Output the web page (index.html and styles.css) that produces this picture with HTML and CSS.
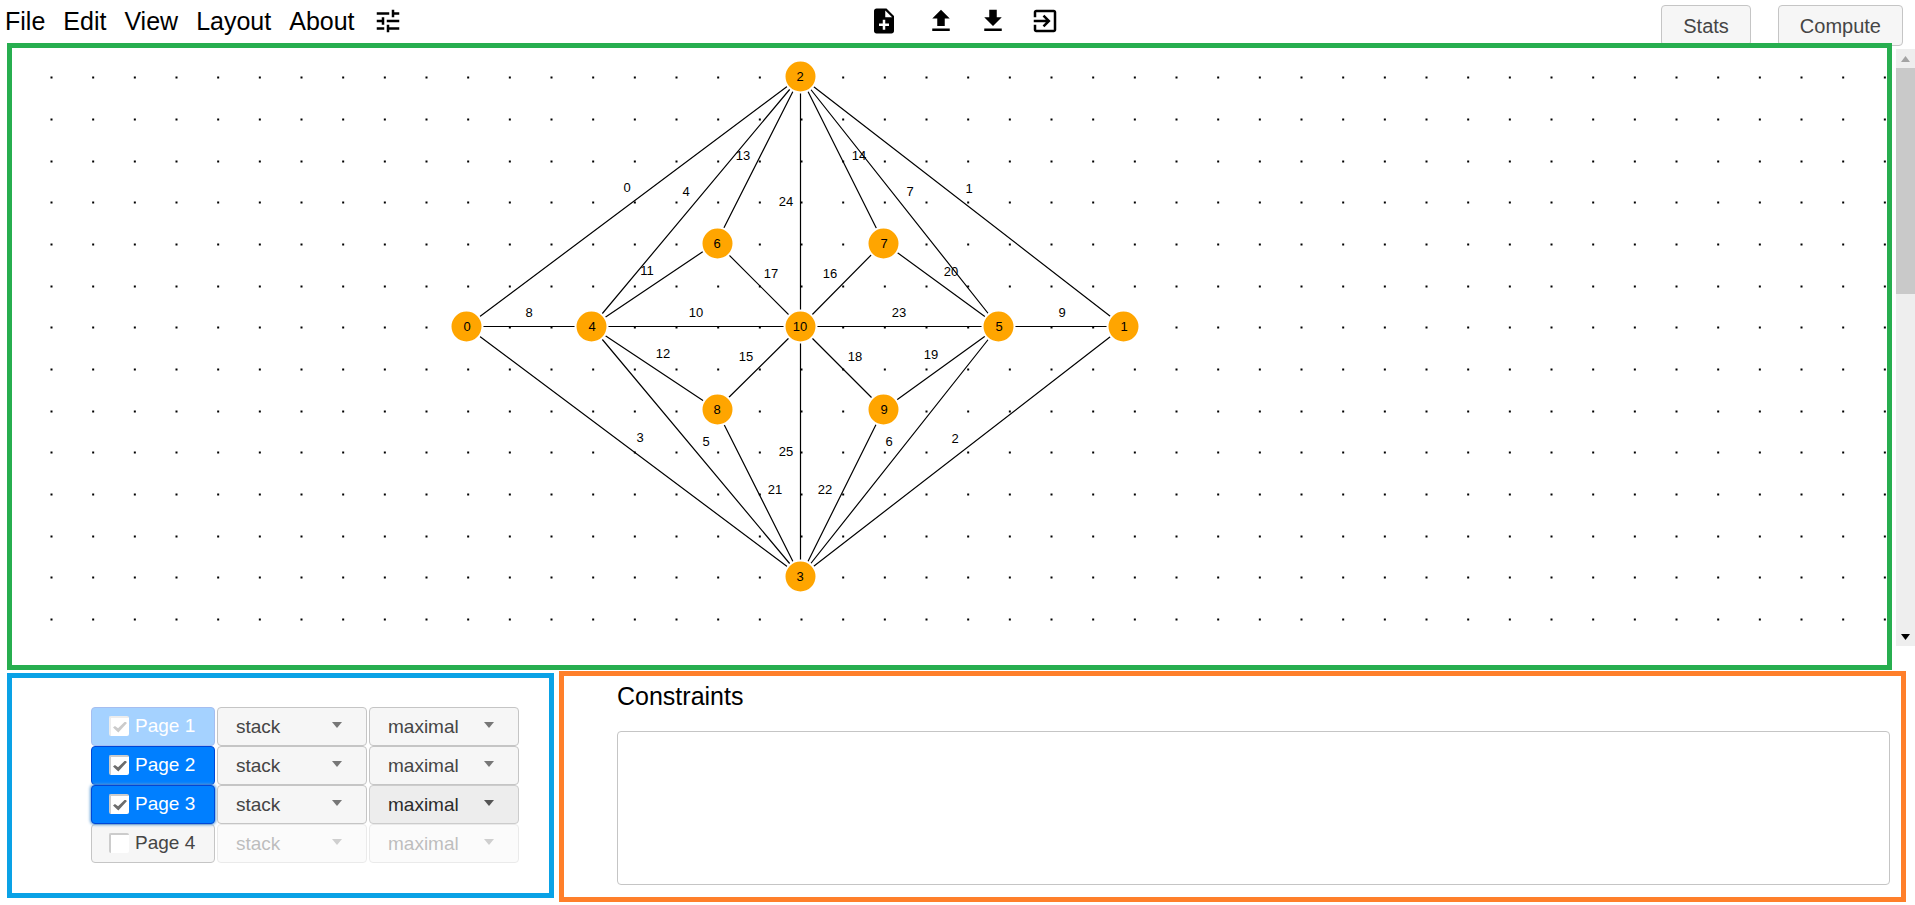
FILE: index.html
```html
<!DOCTYPE html>
<html lang="en">
<head>
<meta charset="utf-8">
<title>Graph layout editor</title>
<link rel="stylesheet" href="styles.css">
</head>
<body>
<header class="topbar">
  <nav class="menu">
    <a href="#file">File</a>
    <a href="#edit">Edit</a>
    <a href="#view">View</a>
    <a href="#layout">Layout</a>
    <a href="#about">About</a>
    <button class="icon-button" type="button" aria-label="Settings"><svg class="icon" viewBox="0 0 24 24"><path d="M3 17v2h6v-2H3zM3 5v2h10V5H3zm10 16v-2h8v-2h-8v-2h-2v6h2zM7 9v2H3v2h4v2h2V9H7zm14 4v-2H11v2h10zm-6-4h2V7h4V5h-4V3h-2v6z"/></svg></button>
  </nav>
  <div class="tools">
    <button class="icon-button" type="button" aria-label="New"><svg class="icon" viewBox="0 0 24 24"><path d="M14 2H6c-1.100 0-1.990.9-1.990 2L4 20c0 1.100.89 2 1.990 2H18c1.100 0 2-.9 2-2V8l-6-6zm2 14h-3v3h-2v-3H8v-2h3v-3h2v3h3v2zm-3-7V3.500L18.500 9H13z"/></svg></button>
    <div class="transfer">
      <button class="icon-button" type="button" aria-label="Open"><svg class="icon" viewBox="0 0 24 24"><path d="M9 16h6v-6h4l-7-7-7 7h4zM5 18h14v2H5z"/></svg></button>
      <button class="icon-button" type="button" aria-label="Save"><svg class="icon" viewBox="0 0 24 24"><path d="M19 9h-4V3H9v6H5l7 7 7-7zM5 18v2h14v-2H5z"/></svg></button>
      <button class="icon-button" type="button" aria-label="Export"><svg class="icon" viewBox="0 0 24 24"><path d="M10.090 15.590L11.500 17l5-5-5-5-1.410 1.410L12.670 11H3v2h9.670l-2.580 2.590zM19 3H5c-1.110 0-2 .9-2 2v4h2V5h14v14H5v-4H3v4c0 1.100.89 2 2 2h14c1.100 0 2-.9 2-2V5c0-1.100-.9-2-2-2z"/></svg></button>
    </div>
  </div>
  <div class="actions">
    <button class="action" type="button">Stats</button>
    <button class="action" type="button">Compute</button>
  </div>
</header>

<main>
  <div class="workspace">
    <section class="canvas" aria-label="Graph">
      <svg class="graph">
        <path class="grid-dots" d="M38.500 29.500H4000M38.500 71.500H4000M38.500 113.500H4000M38.500 154.500H4000M38.500 196.500H4000M38.500 238.500H4000M38.500 279.500H4000M38.500 321.500H4000M38.500 363.500H4000M38.500 404.500H4000M38.500 446.500H4000M38.500 488.500H4000M38.500 529.500H4000M38.500 571.500H4000"/>
        <g transform="translate(-0.500 -0.500)">
          <path class="edges" d="M455 279L789 29M1112 279L789 29M1112 279L789 529M455 279L789 529M580 279L789 29M580 279L789 529M987 279L789 529M987 279L789 29M455 279H580M987 279H1112M580 279H789M580 279L705 195M580 279L705 362M789 29L705 195M789 29L872 195M789 279L705 362M789 279L872 195M705 195L789 279M789 279L872 362M987 279L872 362M987 279L872 195M705 362L789 529M872 362L789 529M789 279H987M789 29V279M789 279V529"/>
          <g class="nodes">
            <circle cx="455" cy="279" r="16"/><circle cx="1112" cy="279" r="16"/><circle cx="789" cy="29" r="16"/><circle cx="789" cy="529" r="16"/>
            <circle cx="580" cy="279" r="16"/><circle cx="987" cy="279" r="16"/><circle cx="706" cy="196" r="16"/><circle cx="872" cy="196" r="16"/>
            <circle cx="706" cy="362" r="16"/><circle cx="872" cy="362" r="16"/><circle cx="789" cy="279" r="16"/>
          </g>
        </g>
        <g class="labels" transform="translate(0 4)">
          <text x="455" y="279">0</text><text x="1112" y="279">1</text><text x="788" y="29">2</text><text x="788" y="529">3</text>
          <text x="580" y="279">4</text><text x="987" y="279">5</text><text x="705" y="196">6</text><text x="872" y="196">7</text>
          <text x="705" y="362">8</text><text x="872" y="362">9</text><text x="788" y="279">10</text>
        </g>
        <g class="labels" transform="translate(0 5)">
          <text x="615" y="139">0</text><text x="957" y="140">1</text><text x="943" y="390">2</text><text x="628" y="389">3</text>
          <text x="674" y="143">4</text><text x="694" y="393">5</text><text x="877" y="393">6</text><text x="898" y="143">7</text>
          <text x="517" y="264">8</text><text x="1050" y="264">9</text><text x="684" y="264">10</text><text x="635" y="222">11</text>
          <text x="651" y="305">12</text><text x="731" y="107">13</text><text x="847" y="107">14</text><text x="734" y="308">15</text>
          <text x="818" y="225">16</text><text x="759" y="225">17</text><text x="843" y="308">18</text><text x="919" y="306">19</text>
          <text x="939" y="223">20</text><text x="763" y="441">21</text><text x="813" y="441">22</text><text x="887" y="264">23</text>
          <text x="774" y="153">24</text><text x="774" y="403">25</text>
        </g>
      </svg>
    </section>
    <div class="scrollbar" aria-hidden="true">
      <svg class="scroll-arrow scroll-arrow-off" viewBox="0 0 19 19"><path d="M5 13h9l-4.500-6z"/></svg>
      <div class="scroll-thumb"></div>
      <svg class="scroll-arrow scroll-arrow-end" viewBox="0 0 19 19"><path d="M5 7h9l-4.500 6z"/></svg>
    </div>
  </div>

  <div class="panels">
    <section class="pages" aria-label="Pages">
      <div class="page-row">
        <label class="page-toggle is-on is-disabled"><input type="checkbox" checked disabled>Page 1</label>
        <span class="picker"><select aria-label="Page 1 type"><option>stack</option><option>queue</option></select></span>
        <span class="picker"><select aria-label="Page 1 constraint"><option>maximal</option><option>none</option></select></span>
      </div>
      <div class="page-row">
        <label class="page-toggle is-on"><input type="checkbox" checked>Page 2</label>
        <span class="picker"><select aria-label="Page 2 type"><option>stack</option><option>queue</option></select></span>
        <span class="picker"><select aria-label="Page 2 constraint"><option>maximal</option><option>none</option></select></span>
      </div>
      <div class="page-row">
        <label class="page-toggle is-on is-focused"><input type="checkbox" checked>Page 3</label>
        <span class="picker"><select aria-label="Page 3 type"><option>stack</option><option>queue</option></select></span>
        <span class="picker is-hovered"><select aria-label="Page 3 constraint"><option>maximal</option><option>none</option></select></span>
      </div>
      <div class="page-row">
        <label class="page-toggle"><input type="checkbox">Page 4</label>
        <span class="picker is-disabled"><select aria-label="Page 4 type" disabled><option>stack</option><option>queue</option></select></span>
        <span class="picker is-disabled"><select aria-label="Page 4 constraint" disabled><option>maximal</option><option>none</option></select></span>
      </div>
    </section>
    <section class="constraints">
      <label for="constraints">Constraints</label>
      <textarea id="constraints"></textarea>
    </section>
  </div>
</main>
</body>
</html>
```
FILE: styles.css
```css
* { box-sizing: border-box; }

body {
  margin: 0;
  background: #fff;
  color: #000;
  font-family: "Liberation Sans", Arial, sans-serif;
  font-size: 25px;
}

/* Top bar */
.topbar {
  display: grid;
  grid-template-columns: 1fr auto 1fr;
  align-items: center;
  height: 43px;
  padding: 0 12px 0 5px;
}

.menu {
  display: flex;
  align-items: center;
  gap: 18px;
  line-height: 28px;
}

.menu a {
  color: inherit;
  text-decoration: none;
}

.icon-button {
  padding: 0;
  border: 0;
  background: none;
  color: #000;
}

.icon {
  display: block;
  width: 30px;
  height: 30px;
  fill: currentColor;
}

.menu, .tools { padding-bottom: 5px; }

.tools {
  display: flex;
  gap: 27px;
  margin-left: 20px;
}

.transfer {
  display: flex;
  gap: 22px;
}

.actions {
  display: flex;
  align-self: start;
  justify-content: flex-end;
  gap: 27px;
  padding-top: 5px;
}

.action {
  height: 41px;
  padding: 2px 21px 0;
  border: 1px solid #c5c5c5;
  border-radius: 4px;
  background: #f6f6f6;
  color: #454545;
  font: 20px "Liberation Sans", Arial, sans-serif;
}

/* Graph canvas */
.workspace {
  position: relative;
  display: grid;
  grid-template-columns: 1fr 19px;
  gap: 4px;
  padding-left: 7px;
}

.canvas {
  min-width: 0;
  padding-bottom: 19px;
  border: 5px solid #27ae4f;
  background: #fff;
}

.graph {
  display: block;
  width: 100%;
  height: 598px;
}

.grid-dots {
  fill: none;
  stroke: #000;
  stroke-width: 2;
  stroke-dasharray: 2 39.667;
}

.edges {
  fill: none;
  stroke: #000;
  stroke-width: 1.2;
}

.nodes {
  fill: #ffa500;
  stroke: #fff;
  stroke-width: 2;
}

.labels {
  font-size: 13px;
  text-anchor: middle;
}

.scrollbar {
  display: flex;
  flex-direction: column;
  margin: 6px 0 24px;
  background: #eee;
}

.scroll-arrow {
  width: 19px;
  height: 19px;
}

.scroll-arrow-off { fill: #a3a3a3; }
.scroll-arrow-end { margin-top: auto; }

.scroll-thumb {
  height: 226px;
  background: #c9c9c9;
}

/* Bottom panels */
.panels {
  display: grid;
  grid-template-columns: 547px 1fr;
  gap: 5px;
  padding: 1px 9px 3px 7px;
}

.pages {
  margin: 2px 0 4px;
  padding: 29px 0 30px 79px;
  border: 5px solid #0aa2e6;
  font-size: 19px;
}

.page-row {
  display: grid;
  grid-template-columns: 124px 150px 150px;
  gap: 2px;
  height: 39px;
}

.page-toggle {
  display: flex;
  align-items: center;
  gap: 6px;
  padding: 0 0 1px 17px;
  border: 1px solid #c5c5c5;
  border-radius: 4px;
  background: #f6f6f6;
  color: #454545;
}

.page-toggle.is-on {
  border-color: #0047d6;
  background: #007fff;
  color: #fff;
}

.page-toggle.is-focused {
  position: relative;
  box-shadow: 0 0 3px 1px #5e9ed6;
}

.page-toggle.is-disabled,
.picker.is-disabled { opacity: 0.35; }

.page-toggle input {
  display: grid;
  place-items: center;
  width: 20px;
  height: 20px;
  margin: 0;
  appearance: none;
  border: solid #ccc;
  border-width: 2px 0 0 2px;
  border-radius: 2px;
  background: #fff;
}

.page-toggle input:checked::before {
  content: "";
  width: 14px;
  height: 11px;
  background: #6d6d6d;
  clip-path: polygon(0 55%, 14% 40%, 36% 62%, 86% 0, 100% 14%, 38% 100%);
}

.picker {
  position: relative;
  display: flex;
  color: #454545;
}

.picker select {
  width: 100%;
  padding: 0 18px 1px;
  appearance: none;
  border: 1px solid #c5c5c5;
  border-radius: 4px;
  background: #f6f6f6;
  color: inherit;
  font: inherit;
  opacity: 1;
}

.picker::after {
  content: "";
  position: absolute;
  top: 15px;
  right: 25px;
  border: solid transparent;
  border-width: 6px 5px 0;
  border-top-color: #777;
  pointer-events: none;
}

.picker.is-hovered { color: #2b2b2b; }
.picker.is-hovered::after { border-top-color: #555; }

.picker.is-hovered select {
  border-color: #ccc;
  background: #ededed;
}

.constraints {
  display: flex;
  flex-direction: column;
  gap: 21px;
  padding: 6px 11px 12px 53px;
  border: 5px solid #ff7f2a;
  line-height: 28px;
}

.constraints textarea {
  height: 154px;
  border: 1px solid #c5c5c5;
  border-radius: 4px;
  background: #fff;
  resize: none;
  font: inherit;
}
```
